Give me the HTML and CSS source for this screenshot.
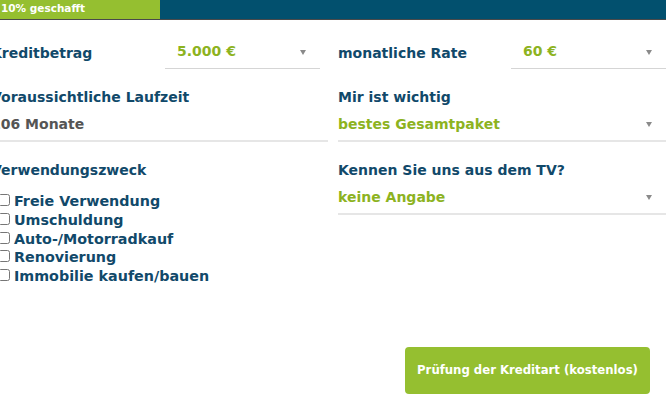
FILE: index.html
```html
<!DOCTYPE html>
<html lang="de">
<head>
    <meta charset="UTF-8">
    <meta name="viewport" content="width=device-width, initial-scale=1.0">
    <title>Kreditanfrage</title>
    <link rel="stylesheet" href="styles.css">
</head>
<body>

    <div class="progress">
        <div class="progress-done">10% geschafft</div>
    </div>

    <form class="credit-form">
        <div class="field inline">
            <label>Kreditbetrag</label>
            <div class="select boxed">5.000 €</div>
        </div>
        <div class="field inline">
            <label>monatliche Rate</label>
            <div class="select boxed">60 €</div>
        </div>

        <div class="field">
            <label>Voraussichtliche Laufzeit</label>
            <div class="value plain">106 Monate</div>
        </div>
        <div class="field">
            <label>Mir ist wichtig</label>
            <div class="value select">bestes Gesamtpaket</div>
        </div>

        <div class="field">
            <label>Verwendungszweck</label>
            <div class="purposes">
                <label class="check"><input type="checkbox">Freie Verwendung</label>
                <label class="check"><input type="checkbox">Umschuldung</label>
                <label class="check"><input type="checkbox">Auto-/Motorradkauf</label>
                <label class="check"><input type="checkbox">Renovierung</label>
                <label class="check"><input type="checkbox">Immobilie kaufen/bauen</label>
            </div>
        </div>
        <div class="field">
            <label>Kennen Sie uns aus dem TV?</label>
            <div class="value select">keine Angabe</div>
        </div>

        <div class="actions">
            <button type="submit">Prüfung der Kreditart (kostenlos)</button>
        </div>
    </form>

</body>
</html>
```

FILE: styles.css
```css
body {
    font-family: "DejaVu Sans", Verdana, sans-serif;
    background-color: #fff;
    margin: 0;
    padding: 0;
    overflow: hidden;
}

.progress {
    height: 19px;
    background-color: #02506e;
    border-bottom: 1px solid #4a4a4a;
}

.progress-done {
    width: 160px;
    height: 19px;
    box-sizing: border-box;
    padding-left: 1px;
    background-color: #95bf30;
    color: #fff;
    font-size: 10.5px;
    font-weight: 700;
    line-height: 17px;
}

.credit-form {
    display: grid;
    grid-template-columns: 337px 328px;
    column-gap: 10px;
    row-gap: 17px;
    margin: 16px 0 0 -9px;
    color: #11496a;
    font-size: 14px;
    font-weight: 700;
}

.field label {
    display: block;
    line-height: 20px;
}

.inline {
    display: grid;
    grid-template-columns: 1fr 155px;
    height: 33px;
}

.inline:first-child {
    padding-right: 8px;
}

.inline label {
    align-self: center;
    padding-top: 5px;
}

.select {
    position: relative;
    color: #8db31f;
}

.select::after {
    content: "";
    position: absolute;
    right: 14px;
    top: 50%;
    margin-top: -2px;
    border-left: 3.5px solid transparent;
    border-right: 3.5px solid transparent;
    border-top: 5px solid #8a8a8a;
}

.boxed {
    display: flex;
    align-items: center;
    padding: 0 0 2px 12px;
    border-bottom: 1px solid #d5d5d5;
}

.value {
    line-height: 20px;
    padding: 7px 0 6px;
    border-bottom: 2px solid #e6e6e6;
}

.field > label:first-child {
    padding-top: 1px;
}

.plain {
    color: #555;
}

.purposes {
    margin-top: 11px;
    font-size: 14.3px;
}

.check {
    display: flex;
    align-items: center;
    height: 18.75px;
}

.check input {
    width: 12px;
    height: 12px;
    margin: 0 4px 0 7px;
}

.actions {
    grid-column: 2;
    display: flex;
    justify-content: flex-end;
    padding-right: 16px;
    margin-top: 45px;
}

.actions button {
    width: 245px;
    height: 47px;
    background-color: #95bf30;
    color: #fff;
    border: none;
    border-radius: 4px;
    font-family: "DejaVu Sans", Verdana, sans-serif;
    font-size: 11.7px;
    font-weight: 700;
    cursor: pointer;
}
```
